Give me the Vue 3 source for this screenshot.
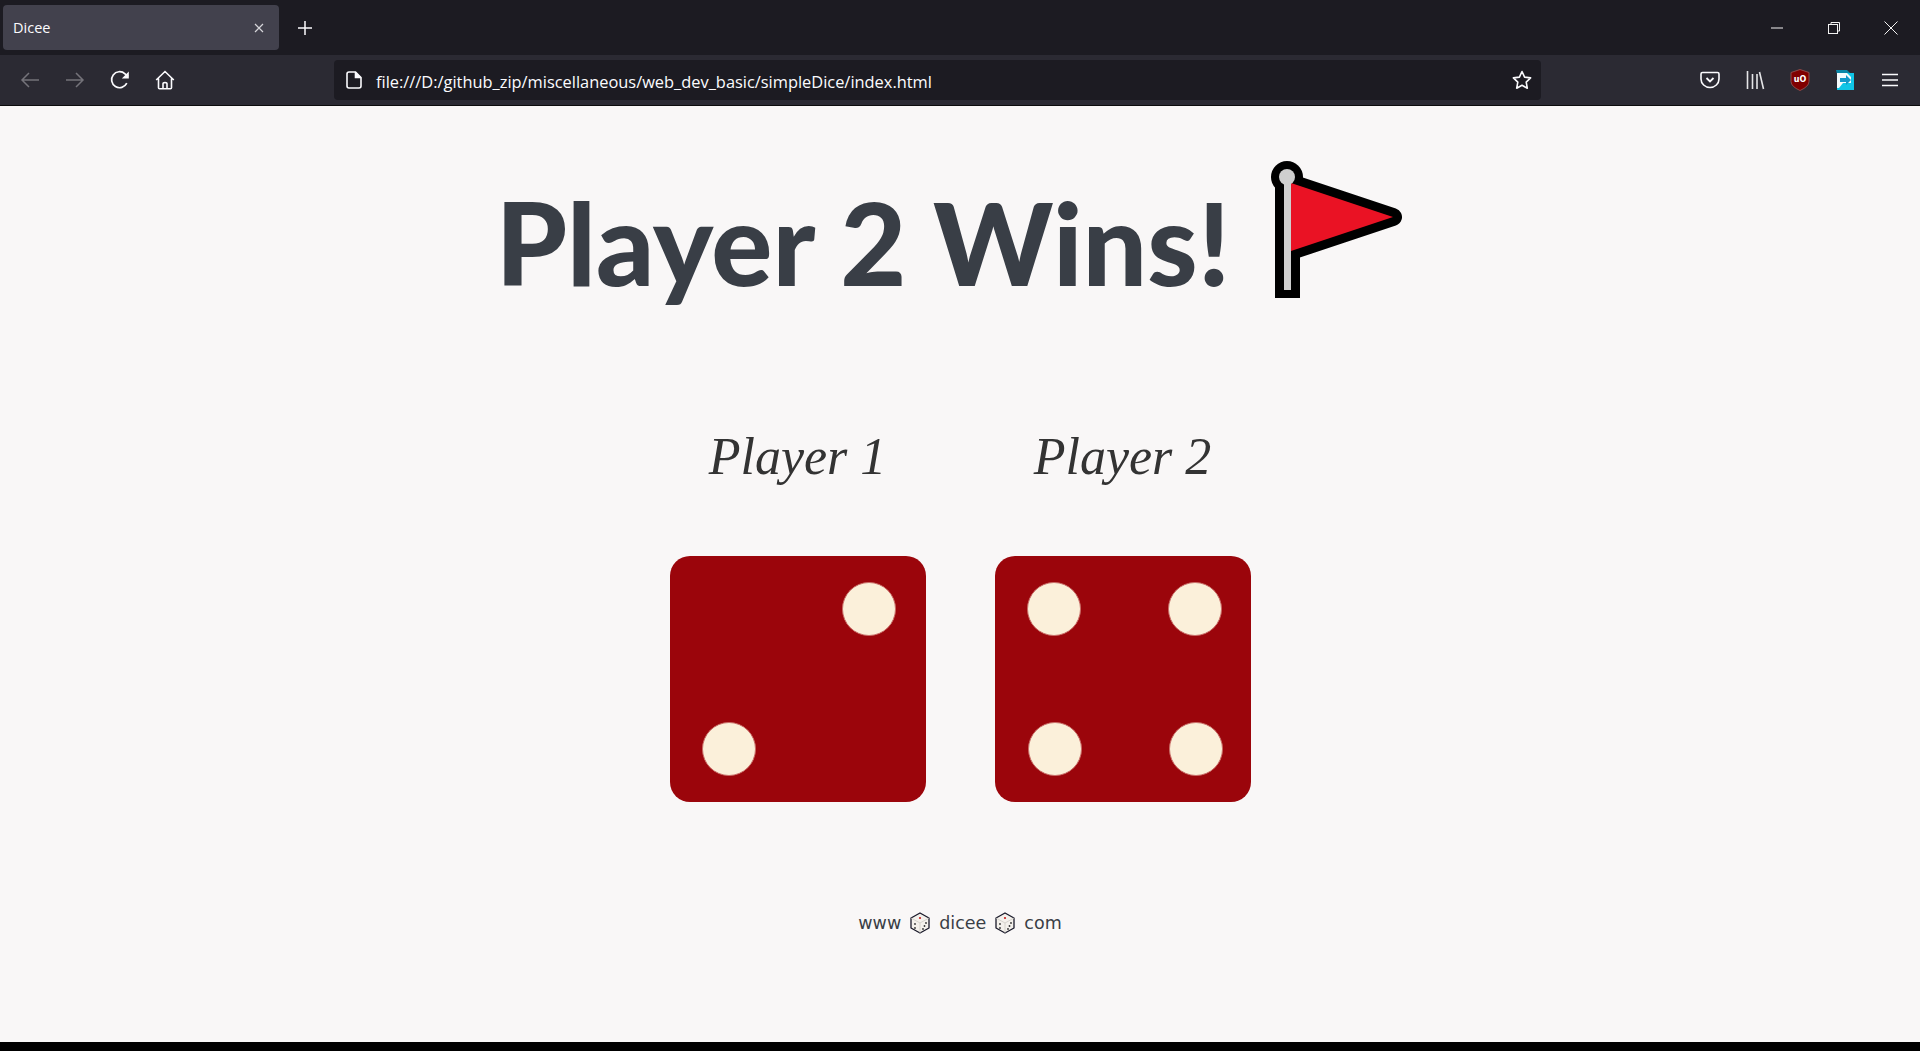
<template>
  <div class="window">
    <div class="tabbar">
      <div class="tab">
        <span class="tab-title">Dicee</span>
        <svg class="tab-close" width="12" height="12" viewBox="0 0 12 12"><path d="M2 2l8 8M10 2l-8 8" stroke="#d6d5da" stroke-width="1.2" fill="none" /></svg>
      </div>
      <svg class="new-tab" width="16" height="16" viewBox="0 0 16 16"><path d="M8 1v14M1 8h14" stroke="#fbfbfe" stroke-width="1.5" fill="none" /></svg>
      <div class="win-controls">
        <button class="win-btn"><svg width="14" height="14" viewBox="0 0 14 14"><path d="M1 7h12" stroke="#f2f2f2" stroke-width="1" /></svg></button>
        <button class="win-btn"><svg width="14" height="14" viewBox="0 0 14 14" fill="none" stroke="#f2f2f2"><rect x="1.5" y="3.5" width="9" height="9" /><path d="M4 3.5V1.5h8.5v8.5h-2" /></svg></button>
        <button class="win-btn"><svg width="14" height="14" viewBox="0 0 14 14"><path d="M.5.5l13 13M13.500.5l-13 13" stroke="#f2f2f2" stroke-width="1" fill="none" /></svg></button>
      </div>
    </div>

    <div class="toolbar">
      <div class="tool"><svg width="20" height="20" viewBox="0 0 20 20" fill="none" stroke="#74737a" stroke-width="1.5"><path d="M19 10H2M9 3l-7 7 7 7" /></svg></div>
      <div class="tool"><svg width="20" height="20" viewBox="0 0 20 20" fill="none" stroke="#74737a" stroke-width="1.5"><path d="M1 10h17M11 3l7 7-7 7" /></svg></div>
      <div class="tool"><svg width="20" height="20" viewBox="0 0 20 20" fill="none" stroke="#fbfbfe" stroke-width="1.7"><path d="M16.800 13.200A8 8 0 1 1 15 3.800L18 6.500" /><path d="M18.800 1.500v7h-7z" fill="#fbfbfe" stroke="none" /></svg></div>
      <div class="tool"><svg width="20" height="20" viewBox="0 0 20 20" fill="none" stroke="#fbfbfe" stroke-width="1.6"><path d="M1.200 10L10 1.500 18.800 10M3.500 8.500v9.200q0 1 1 1h11q1 0 1-1V8.500M8 18.700v-5q0-1.200 2-1.200t2 1.200v5" /></svg></div>

      <div class="urlbar">
        <svg class="doc" width="16" height="18" viewBox="0 0 16 18" fill="none" stroke="#fbfbfe" stroke-width="1.6"><path d="M3 1h6.500L15 6.500V15q0 2-2 2H3q-2 0-2-2V3q0-2 2-2z" /><path d="M9.500 1v5.500H15" fill="#fbfbfe" /></svg>
        <span class="url">file:///D:/github_zip/miscellaneous/web_dev_basic/simpleDice/index.html</span>
        <svg class="star" width="20" height="20" viewBox="0 0 20 20" fill="none" stroke="#fbfbfe" stroke-width="1.6" stroke-linejoin="round"><path d="M10 1.500l2.600 5.600 6 .8-4.400 4.200 1.100 6.100L10 15.300l-5.300 2.900 1.100-6.100L1.400 7.900l6-.8z" /></svg>
      </div>

      <div class="tool"><svg width="20" height="20" viewBox="0 0 20 20" fill="none" stroke="#fbfbfe" stroke-width="1.6"><path d="M2.500 2.500h15q1.500 0 1.500 1.500v5a9 8.500 0 0 1-18 0V4q0-1.500 1.500-1.500z" /><path d="M6.500 8l3.500 3.500L13.500 8" stroke-width="1.800" /></svg></div>
      <div class="tool"><svg width="20" height="20" viewBox="0 0 20 20" fill="none" stroke="#e4e4e7" stroke-width="1.6"><path d="M2.500 1v18M7.500 4v15M12 4v15M14.500 2l4 17" /></svg></div>
      <div class="tool"><svg width="20" height="22" viewBox="0 0 20 22"><path d="M10 .5l9 3v9q0 5-9 9-9-4-9-9v-9z" fill="#800000" stroke="#8d4a4a" /><text x="10" y="13" text-anchor="middle" class="ub-text">uO</text></svg></div>
      <div class="tool"><svg width="20" height="20" viewBox="0 0 20 20"><path d="M1 0h11l7 7v13H6z" fill="#0a87a8" /><rect x="2" y="3" width="17" height="17" fill="#10c5e6" /><path d="M2 3h10l4 4v6H8l-4 5H2z" fill="#f4fbfd" /><path d="M5 8h6V5l5 5-5 5v-3H5z" fill="#1398c9" /></svg></div>
      <div class="tool"><svg width="16" height="14" viewBox="0 0 16 14"><path d="M0 1.500h16M0 7h16M0 12.500h16" stroke="#fbfbfe" stroke-width="1.500" /></svg></div>
    </div>

    <main class="page">
      <div class="heading">
        <h1 class="title">Player 2 Wins!</h1>
        <svg class="flag" width="140" height="150" viewBox="0 0 140 150">
          <path d="M23 28L125 62 23 96z" fill="#000" stroke="#000" stroke-width="18" stroke-linejoin="round" />
          <circle cx="19" cy="22" r="16" fill="#000" />
          <rect x="7" y="22" width="25" height="121" fill="#000" />
          <path d="M23 28L125 62 23 96z" fill="#ea1224" />
          <rect x="16" y="22" width="7" height="113" fill="#cfcfcf" />
          <circle cx="19" cy="22" r="8" fill="#cfcfcf" />
        </svg>
      </div>

      <div class="players">
        <div v-for="player in players" :key="player.name" class="player">
          <p class="player-name">{{ player.name }}</p>
          <div class="die">
            <span
              v-for="(pip, i) in player.pips"
              :key="i"
              class="pip"
              :style="{ left: pip[0] + 'px', top: pip[1] + 'px' }"
            ></span>
          </div>
        </div>
      </div>

      <footer class="footer">
        <template v-for="(word, i) in words" :key="word">
          <span>{{ word }}</span>
          <svg v-if="i < words.length - 1" class="cube" width="20" height="22" viewBox="0 0 20 22">
            <path d="M10 1l9 5v10l-9 5-9-5V6z" fill="#f4f1ec" stroke="#1a1a2a" stroke-width="1.300" stroke-linejoin="round" />
            <path d="M1 6l9 5 9-5M10 11v10" fill="none" stroke="#c9c6c0" stroke-width=".7" />
            <circle cx="10" cy="6" r="1.100" fill="#c8201e" />
            <circle cx="5" cy="12" r=".9" fill="#333" /><circle cx="5" cy="16" r=".9" fill="#333" />
            <circle cx="13" cy="17" r=".9" fill="#333" /><circle cx="16" cy="11" r=".9" fill="#333" /><circle cx="14.500" cy="14" r=".9" fill="#333" />
          </svg>
        </template>
      </footer>
    </main>

    <div class="bottom-strip"></div>
  </div>
</template>

<script setup>
const players = [
  { name: 'Player 1', pips: [[172, 26], [32, 166]] },
  { name: 'Player 2', pips: [[32, 26], [173, 26], [33, 166], [174, 166]] },
];

const words = ['www', 'dicee', 'com'];
</script>

<style>
html,
body {
  margin: 0;
  background: #000;
}
</style>

<style scoped>
.window {
  display: flex;
  flex-direction: column;
  height: 1051px;
  overflow: hidden;
  font-family: 'Open Sans', 'Noto Sans', sans-serif;
}

.tabbar {
  display: flex;
  align-items: center;
  height: 55px;
  padding-left: 3px;
  background: #1c1b22;
  color: #fbfbfe;
}

.tab {
  display: flex;
  align-items: center;
  justify-content: space-between;
  box-sizing: border-box;
  width: 276px;
  height: 45px;
  padding: 0 14px 0 10px;
  border-radius: 4px;
  background: #42414d;
  font-size: 14.500px;
}

.new-tab {
  margin-left: 18px;
}

.win-controls {
  display: flex;
  margin-left: auto;
  margin-right: 1px;
}

.win-btn {
  display: flex;
  align-items: center;
  justify-content: center;
  width: 57px;
  height: 45px;
  padding: 0;
  border: 0;
  background: none;
}

.toolbar {
  display: flex;
  align-items: center;
  box-sizing: border-box;
  height: 51px;
  padding: 0 0 0 7px;
  background: #2b2a33;
  border-bottom: 1px solid #0c0c0d;
}

.tool {
  display: flex;
  align-items: center;
  justify-content: center;
  width: 45px;
  height: 40px;
  flex: none;
}

.urlbar {
  display: flex;
  align-items: center;
  box-sizing: border-box;
  width: 1207px;
  height: 40px;
  margin: 0 146px 0 147px;
  padding: 0 9px 0 12px;
  border-radius: 4px;
  background: #1c1b22;
  color: #fbfbfe;
  font-size: 16.400px;
}

.url {
  margin-left: 14px;
  padding-top: 2px;
}

.star {
  margin-left: auto;
}

.ub-text {
  font-family: 'DejaVu Sans', sans-serif;
  font-size: 8px;
  font-weight: 700;
  fill: #fff;
}

.page {
  flex: 1;
  display: flex;
  flex-direction: column;
  align-items: center;
  background: #f9f7f7;
  color: #393e46;
}

.heading {
  display: flex;
  align-items: center;
  height: 150px;
  margin-top: 49px;
  margin-right: 16px;
}

.title {
  margin: 0 38px 0 0;
  padding-top: 24px;
  font-family: 'Lato', sans-serif;
  font-size: 114px;
  font-weight: 900;
  line-height: 1;
  white-space: nowrap;
}

.players {
  display: flex;
  gap: 69px;
  margin-top: 109px;
}

.player {
  display: flex;
  flex-direction: column;
  align-items: center;
  width: 256px;
}

.player-name {
  margin: 0;
  height: 142px;
  padding-top: 5px;
  box-sizing: border-box;
  font-family: 'Liberation Serif', serif;
  font-style: italic;
  font-size: 52px;
  line-height: 76px;
  color: #333;
}

.die {
  position: relative;
  width: 256px;
  height: 246px;
  border-radius: 20px;
  background: #9b050b;
}

.pip {
  position: absolute;
  box-sizing: border-box;
  width: 54px;
  height: 54px;
  border: 1px solid #c96e68;
  border-radius: 50%;
  background: #fbf0da;
}

.footer {
  display: flex;
  align-items: center;
  gap: 9px;
  margin-top: 110px;
  font-family: 'DejaVu Sans', sans-serif;
  font-size: 17.500px;
  color: #393e46;
}

.bottom-strip {
  height: 9px;
  background: #000;
}
</style>
